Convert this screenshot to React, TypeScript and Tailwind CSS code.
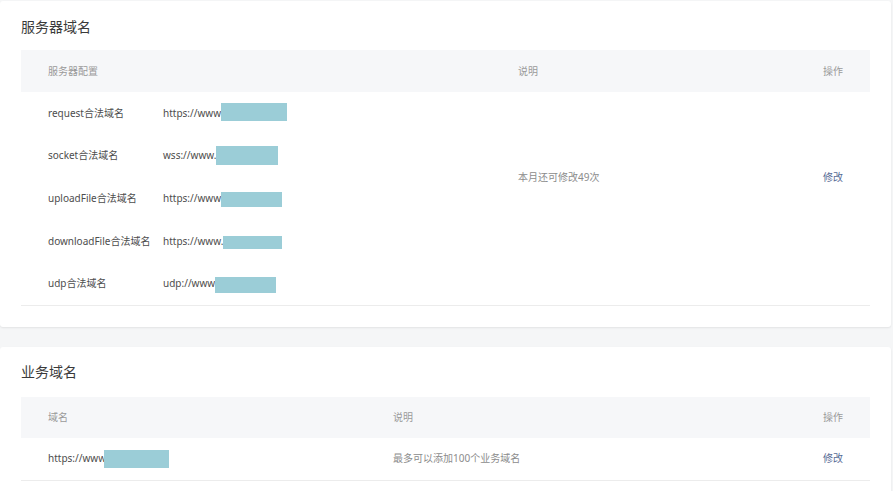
import React from "react";

const font = { fontFamily: '"Noto Sans", "Noto Sans CJK SC", sans-serif' };

type Row = { label: string; prefix: string; w: number; h: number; dy: number; ml: number };

const rows: Row[] = [
  { label: "request合法域名", prefix: "https://www", w: 66, h: 18, dy: -1, ml: 0 },
  { label: "socket合法域名", prefix: "wss://www.", w: 62, h: 19, dy: 0, ml: 0 },
  { label: "uploadFile合法域名", prefix: "https://www", w: 61, h: 15, dy: 1, ml: 0 },
  { label: "downloadFile合法域名", prefix: "https://www.", w: 59, h: 13, dy: 1, ml: 0 },
  { label: "udp合法域名", prefix: "udp://www", w: 61, h: 16, dy: 1, ml: 0 },
];

function Mask({ w, h, dy, ml }: { w: number; h: number; dy: number; ml: number }) {
  return (
    <span
      className="inline-block bg-[#9bcdd7]"
      style={{ width: w, height: h, transform: `translateY(${dy}px)`, marginLeft: ml }}
    />
  );
}

export default function App() {
  return (
    <div className="min-h-[491px] w-[893px] bg-[#f5f6f7] pt-px pr-[2px]" style={font}>
      {/* Card 1 */}
      <div className="rounded-[3px] bg-white shadow-[0_1px_2px_rgba(0,0,0,0.08)]">
        <div className="px-[21px] pt-[16px] pb-[21px]">
          <h2 className="text-[14px] leading-[20px] text-[#3a3a3a]">服务器域名</h2>
          <div className="mt-[13px]">
            <div className="flex h-[42px] items-center bg-[#f6f7f9] text-[10px] text-[#9a9a9a]">
              <div className="w-[497px] pl-[27px]">服务器配置</div>
              <div className="flex-1">说明</div>
              <div className="pr-[27px]">操作</div>
            </div>
            <div className="flex border-b border-[#ececec] text-[10px]">
              <div className="w-[497px] pl-[27px] text-[#4d4d4d]">
                {rows.map((r) => (
                  <div key={r.label} className="flex h-[42.6px] items-center">
                    <span className="w-[115px]">{r.label}</span>
                    <span className="flex items-center">
                      {r.prefix}
                      <Mask w={r.w} h={r.h} dy={r.dy} ml={r.ml} />
                    </span>
                  </div>
                ))}
              </div>
              <div className="flex-1 pt-[78px] leading-[14px] text-[#8c8c8c]">本月还可修改49次</div>
              <div className="pt-[78px] pr-[27px] leading-[14px] text-[#576b95]">修改</div>
            </div>
          </div>
        </div>
      </div>

      {/* Card 2 */}
      <div className="mt-[20px] rounded-[3px] bg-white shadow-[0_1px_2px_rgba(0,0,0,0.08)]">
        <div className="px-[21px] pt-[15px] pb-[21px]">
          <h2 className="text-[14px] leading-[20px] text-[#3a3a3a]">业务域名</h2>
          <div className="mt-[15px]">
            <div className="flex h-[41px] items-center bg-[#f6f7f9] text-[10px] text-[#9a9a9a]">
              <div className="w-[372px] pl-[27px]">域名</div>
              <div className="flex-1">说明</div>
              <div className="pr-[27px]">操作</div>
            </div>
            <div className="flex h-[43px] items-center border-b border-[#ececec] text-[10px]">
              <div className="flex w-[372px] items-center pl-[27px] text-[#4d4d4d]">
                https://www
                <Mask w={65} h={18} dy={0} ml={-2} />
              </div>
              <div className="flex-1 text-[#8c8c8c]">最多可以添加100个业务域名</div>
              <div className="pr-[27px] text-[#576b95]">修改</div>
            </div>
          </div>
        </div>
      </div>
    </div>
  );
}
